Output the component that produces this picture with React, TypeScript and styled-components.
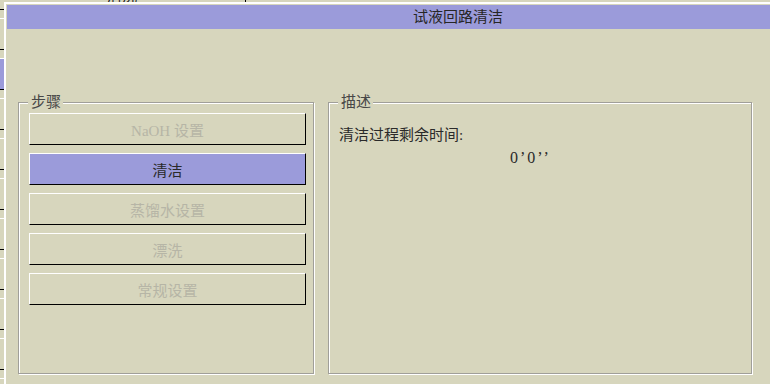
import React from "react";
import styled, { createGlobalStyle } from "styled-components";

const BEIGE = "#d7d6bd";
const PURPLE = "#9b9bda";
const FONT = `"Liberation Serif", "Noto Sans CJK SC", serif`;

const GlobalStyle = createGlobalStyle`
  html, body { margin: 0; padding: 0; background: ${BEIGE}; overflow: hidden; }
  * { box-sizing: border-box; }
`;

const Screen = styled.div`
  position: relative;
  width: 770px;
  height: 384px;
  overflow: hidden;
  background: ${BEIGE};
  font-family: ${FONT};
`;

const BackList = styled.div`
  display: flex;
  flex-direction: column;
  gap: 8px;
  width: 248px;
  margin: -22px 0 0 -2px;
`;

const BackRow = styled.div<{ $selected?: boolean }>`
  height: 32px;
  border-top: 1px solid #fff;
  border-left: 1px solid #fff;
  border-bottom: 1px solid #000;
  border-right: 1px solid #000;
  background: ${(p) => (p.$selected ? PURPLE : BEIGE)};
  display: flex;
  align-items: center;
  justify-content: center;
  font-size: 15px;
  color: #222;
`;

const Dialog = styled.div`
  position: absolute;
  left: 4px;
  top: 2px;
  right: -160px;
  bottom: -10px;
  border-top: 2px solid #fff;
  border-left: 2px solid #fff;
  padding: 1px 0 0 1px;
  background: ${BEIGE};
  display: flex;
  flex-direction: column;
`;

const TitleBar = styled.div`
  height: 24px;
  background: ${PURPLE};
  padding-left: 406px;
  font-size: 15px;
  line-height: 24px;
  color: #262626;
`;

const Body = styled.div`
  display: flex;
  gap: 14px;
  padding: 73px 0 0 11px;
`;

const Group = styled.div<{ $width: number }>`
  position: relative;
  width: ${(p) => p.$width}px;
  height: 272px;
  border: 1px solid #a09f99;
  box-shadow: inset 1px 1px 0 #fff, 1px 1px 0 #fff;
`;

const Legend = styled.span`
  position: absolute;
  top: -9px;
  left: 9px;
  padding: 0 2px 0 3px;
  background: ${BEIGE};
  font-size: 15px;
  line-height: 16px;
  color: #474747;
`;

const StepList = styled.div`
  display: flex;
  flex-direction: column;
  gap: 8px;
  padding: 10px 0 0 10px;
`;

const StepButton = styled.div<{ $active?: boolean }>`
  width: 277px;
  height: 32px;
  border-top: 1px solid #fff;
  border-left: 1px solid #fff;
  border-bottom: 1px solid #000;
  border-right: 1px solid #000;
  background: ${(p) => (p.$active ? PURPLE : BEIGE)};
  color: ${(p) => (p.$active ? "#2a2a2a" : "#b6b5a6")};
  display: flex;
  align-items: center;
  justify-content: center;
  padding-top: 3px;
  font-size: 15px;
  line-height: 16px;
`;

const Desc = styled.div`
  padding: 24px 0 0 10px;
  font-size: 15px;
  line-height: 16px;
  color: #2a2a2a;
`;

const DescLine = styled.div<{ $indent?: number }>`
  padding-left: ${(p) => p.$indent ?? 0}px;
  margin-bottom: 7px;
`;

const Time = styled.span`
  font-size: 16px;
  letter-spacing: 2px;
`;

const steps = [
  { label: "NaOH 设置", active: false },
  { label: "清洁", active: true },
  { label: "蒸馏水设置", active: false },
  { label: "漂洗", active: false },
  { label: "常规设置", active: false },
];

const backRows = Array.from({ length: 11 }, (_, i) => i);

export default function App() {
  return (
    <Screen>
      <GlobalStyle />
      <BackList>
        {backRows.map((i) => (
          <BackRow key={i} $selected={i === 2}>
            {i === 0 ? "清洗" : ""}
          </BackRow>
        ))}
      </BackList>
      <Dialog>
        <TitleBar>试液回路清洁</TitleBar>
        <Body>
          <Group $width={296}>
            <Legend>步骤</Legend>
            <StepList>
              {steps.map((s) => (
                <StepButton key={s.label} $active={s.active}>
                  {s.label}
                </StepButton>
              ))}
            </StepList>
          </Group>
          <Group $width={424}>
            <Legend>描述</Legend>
            <Desc>
              <DescLine>清洁过程剩余时间:</DescLine>
              <DescLine $indent={171}>
                <Time>0’0’’</Time>
              </DescLine>
            </Desc>
          </Group>
        </Body>
      </Dialog>
    </Screen>
  );
}
